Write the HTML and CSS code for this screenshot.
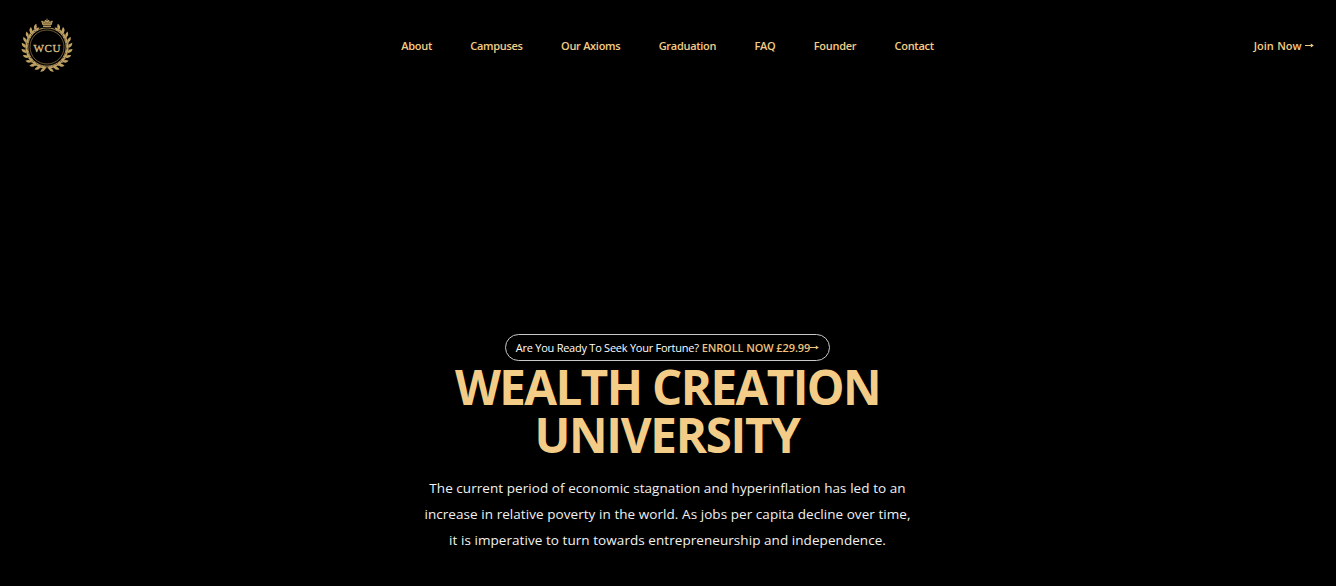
FILE: index.html
```html
<!DOCTYPE html>
<html lang="en">
<head>
<meta charset="utf-8">
<title>Wealth Creation University</title>
<link rel="stylesheet" href="styles.css">
</head>
<body>
<header class="header">
  <a class="brand" aria-label="WCU">
    <svg class="logo" viewBox="-27 -29 54 56" width="54" height="56">
      <defs>
        <g id="sprig">
          <path d="M-2.8 21.1Q-1 22.2 1 21Q3.8 21.8 4.6 25.2Q.8 25.4 0 22.4Z"/>
          <path d="M-1.8 20.5Q1.6 17.9 5 20.4Q2 22.8-1.8 20.5Z"/>
        </g>
        <g id="branch">
          <use href="#sprig" transform="rotate(-5)"/>
          <use href="#sprig" transform="rotate(-19)"/>
          <use href="#sprig" transform="rotate(-33)"/>
          <use href="#sprig" transform="rotate(-47)"/>
          <use href="#sprig" transform="rotate(-61)"/>
          <use href="#sprig" transform="rotate(-75)"/>
          <use href="#sprig" transform="rotate(-89)"/>
          <use href="#sprig" transform="rotate(-103)"/>
          <use href="#sprig" transform="rotate(-117)"/>
          <use href="#sprig" transform="rotate(-131)"/>
          <use href="#sprig" transform="rotate(-145)"/>
        </g>
      </defs>
      <g class="leaves"><use href="#branch"/><use href="#branch" transform="scale(-1 1)"/></g>
      <circle class="ring" r="19.2"/>
      <circle class="ring ring-inner" r="17"/>
      <path class="crown-back" d="M-6-28H6V-19.5H-6Z"/>
      <path class="crown" d="M-4-20.5H4M-4-22L-5.3-26L-2.5-24.5L-1.6-27L0-24.8L1.6-27L2.5-24.5L5.3-26L4-22ZM0-28.3V-25"/>
      <text class="monogram" x="0" y="4.6" text-anchor="middle" textLength="27">WCU</text>
    </svg>
  </a>
  <nav class="nav">
    <a>About</a><a>Campuses</a><a>Our Axioms</a><a>Graduation</a><a>FAQ</a><a>Founder</a><a>Contact</a>
  </nav>
  <a class="join">Join Now <svg class="arrow" viewBox="0 0 9 6" width="9" height="6"><path d="M0 2.5H8"/><path class="tip" d="M5.8 .6L8.8 2.5L5.8 4.4Z"/></svg></a>
</header>
<main class="hero">
  <div class="pill"><span class="question">Are You Ready To Seek Your Fortune?</span><a class="enroll">ENROLL NOW £29.99<svg class="arrow" viewBox="0 0 9 6" width="9" height="6"><path d="M0 2.5H8"/><path class="tip" d="M5.8 .6L8.8 2.5L5.8 4.4Z"/></svg></a></div>
  <h1 class="title"><span class="title-top">WEALTH CREATION</span><span class="title-bottom">UNIVERSITY</span></h1>
  <p class="lead">The current period of economic stagnation and hyperinflation has led to an<br>increase in relative poverty in the world. As jobs per capita decline over time,<br>it is imperative to turn towards entrepreneurship and independence.</p>
</main>
</body>
</html>
```
FILE: styles.css
```css
* { box-sizing: border-box; }
body {
  margin: 0;
  height: 586px;
  overflow: hidden;
  background: #000;
  color: #f1f1f1;
  font-family: "Open Sans", "Noto Sans", sans-serif;
}
.header {
  display: grid;
  grid-template-columns: 1fr auto 1fr;
  align-items: center;
  height: 92px;
  padding: 0 22px 0 20px;
  color: #f3cd87;
  font-size: 11px;
  font-weight: 600;
  line-height: 20px;
}
.brand { display: flex; }
.logo { display: block; }
.leaves { fill: #bfa163; }
.ring { fill: none; stroke: #b3965c; stroke-width: 1; }
.ring-inner { stroke-width: .6; }
.crown-back { fill: #000; }
.crown { fill: #8c7444; stroke: #c6a768; stroke-width: .9; }
.monogram { fill: #dcc28a; font: 400 11px "Liberation Serif", serif; stroke: #dcc28a; stroke-width: .3; }
.nav { display: flex; gap: 38.4px; padding-left: 1px; letter-spacing: -.3px; }
.join { justify-self: end; word-spacing: .6px; }
.arrow { fill: none; stroke: currentColor; stroke-width: 1; vertical-align: 1px; }
.tip { fill: currentColor; stroke: none; }
.hero {
  display: flex;
  flex-direction: column;
  align-items: center;
  padding: 242px 1px 0 0;
}
.pill {
  display: flex;
  justify-content: center;
  gap: 3px;
  width: 325px;
  height: 27px;
  border: 1px solid #c9c9c9;
  border-radius: 14px;
  font-size: 11px;
  line-height: 26px;
  white-space: nowrap;
}
.question { color: #fff; letter-spacing: -.25px; }
.enroll { color: #edc27c; font-weight: 600; letter-spacing: -.1px; }
.title {
  display: flex;
  flex-direction: column;
  align-items: center;
  margin: 2px 0 0;
  color: #f3cd87;
  font-size: 47.5px;
  font-weight: 700;
  line-height: 48px;
  white-space: nowrap;
}
.title-top { letter-spacing: -1.6px; }
.title-bottom { letter-spacing: -1.3px; margin-left: -1px; }
.lead {
  margin: 16px 0 0;
  font-size: 13.5px;
  font-weight: 500;
  line-height: 26px;
  letter-spacing: .06px;
  text-align: center;
  white-space: nowrap;
}
```
